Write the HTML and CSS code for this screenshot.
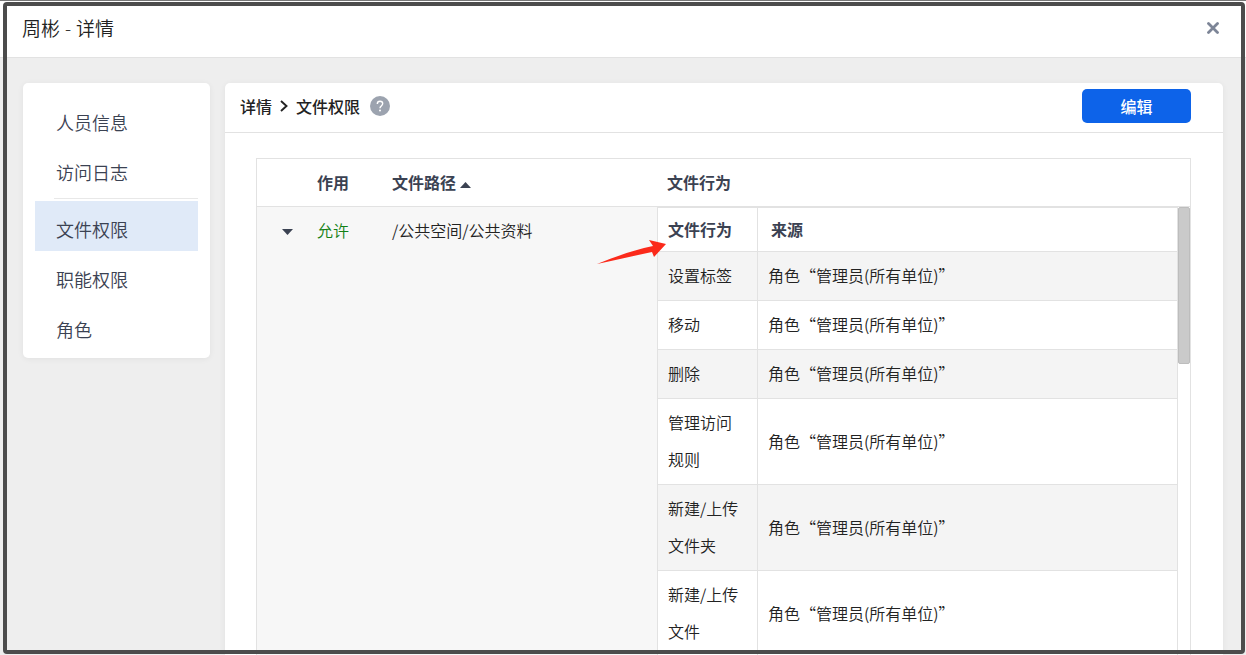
FILE: index.html
```html
<!DOCTYPE html>
<html lang="zh-CN">
<head>
<meta charset="utf-8">
<meta name="viewport" content="width=device-width, initial-scale=1">
<title>周彬 - 详情</title>
<link rel="stylesheet" href="styles.css">
</head>
<body>
<div class="dialog">
  <header class="dialog-head">
    <h1 class="dialog-title">周彬 - 详情</h1>
    <button class="close" type="button" aria-label="关闭">
      <svg width="12" height="12" viewBox="0 0 12 12"><path d="M1.5 1.5 10.5 10.5M10.5 1.5 1.5 10.5" stroke="#7d8597" stroke-width="2.8" stroke-linecap="round"/></svg>
    </button>
  </header>
  <main class="dialog-body">
    <nav class="side">
      <a class="side-item" href="#">人员信息</a>
      <a class="side-item" href="#">访问日志</a>
      <div class="side-rule"></div>
      <a class="side-item active" href="#">文件权限</a>
      <a class="side-item" href="#">职能权限</a>
      <a class="side-item" href="#">角色</a>
    </nav>
    <section class="panel">
      <div class="panel-head">
        <h2 class="crumbs">
          <span>详情</span>
          <svg width="8" height="12" viewBox="0 0 8 12" fill="none"><path d="M1 1 6.5 6 1 11" stroke="#222" stroke-width="1.9"/></svg>
          <span>文件权限</span>
        </h2>
        <svg class="help" width="20" height="20" viewBox="0 0 20 20" fill="none"><circle cx="10" cy="10" r="10" fill="#9ca3af"/><path d="M7.3 7.9C7.3 6.2 8.4 5.2 10 5.2s2.7 1 2.7 2.4c0 1.2-.7 1.8-1.5 2.5-.8.6-1.2 1.1-1.2 2.2" stroke="#fff" stroke-width="1.4"/><circle cx="10" cy="14.6" r="1" fill="#fff"/></svg>
        <button class="edit" type="button">编辑</button>
      </div>
      <div class="panel-body">
        <table class="grid">
          <colgroup><col class="c-toggle"><col class="c-effect"><col class="c-path"><col></colgroup>
          <thead>
            <tr><th></th><th>作用</th><th>文件路径<svg class="sort" width="11" height="6" viewBox="0 0 11 6"><path d="M0 6 5.5 0 11 6z" fill="#3b4252"/></svg></th><th>文件行为</th></tr>
          </thead>
          <tbody>
            <tr>
              <td class="toggle-cell"><button class="toggle" type="button" aria-label="收起"><svg width="11" height="6" viewBox="0 0 11 6"><path d="M0 0h11L5.5 6z" fill="#3b4252"/></svg></button></td>
              <td class="allow">允许</td>
              <td>/公共空间/公共资料</td>
              <td class="nest-cell">
                <div class="nest">
                  <table class="actions">
                    <colgroup><col class="c-action"><col></colgroup>
                    <thead><tr><th>文件行为</th><th class="source-head">来源</th></tr></thead>
                    <tbody>
                      <tr><td>设置标签</td><td>角色“管理员(所有单位)”</td></tr>
                      <tr><td>移动</td><td>角色“管理员(所有单位)”</td></tr>
                      <tr><td>删除</td><td>角色“管理员(所有单位)”</td></tr>
                      <tr><td>管理访问规则</td><td>角色“管理员(所有单位)”</td></tr>
                      <tr><td>新建/上传文件夹</td><td>角色“管理员(所有单位)”</td></tr>
                      <tr><td>新建/上传文件</td><td>角色“管理员(所有单位)”</td></tr>
                    </tbody>
                  </table>
                  <div class="track"><div class="thumb"></div></div>
                  <svg class="arrow" width="70" height="26" viewBox="0 0 70 26"><path d="M1 25C19 18 37 11 57 7L53 1 70 5 58 18 56 13C37 17 20 21 1 25z" fill="#fb2a1b"/></svg>
                </div>
              </td>
            </tr>
          </tbody>
        </table>
      </div>
    </section>
  </main>
</div>
<div class="frame"></div>
</body>
</html>
```

FILE: styles.css
```css
* { box-sizing: border-box; }

body {
  margin: 0;
  font-family: "Noto Sans CJK SC", "Liberation Sans", sans-serif;
  font-size: 16px;
  font-weight: 350;
  color: #222;
}

button { padding: 0; border: 0; background: none; cursor: pointer; font: inherit; }
svg { flex: none; }

.dialog {
  display: flex;
  flex-direction: column;
  height: 100vh;
  overflow: hidden;
  border-top: 1px solid #777;
  background: #eee;
}

.dialog-head {
  display: flex;
  flex: none;
  align-items: center;
  justify-content: space-between;
  height: 57px;
  padding: 0 27px 3px 22px;
  border-bottom: 1px solid #e2e2e2;
  background: #fff;
}
.dialog-title {
  margin: 0;
  font-family: "Open Sans", "Noto Sans CJK SC", sans-serif;
  font-size: 19px;
  font-weight: 350;
}
.close { display: flex; }

.dialog-body {
  display: flex;
  flex: 1;
  gap: 15px;
  min-height: 0;
  padding: 25px 23px 0;
}

.side {
  flex: none;
  align-self: flex-start;
  width: 187px;
  padding: 11px 12px 7px;
  border-radius: 5px;
  background: #fff;
  box-shadow: 0 1px 6px rgba(0, 0, 0, 0.06);
}
.side-item {
  display: block;
  padding: 7px 0 1px 21px;
  font-size: 18px;
  line-height: 42px;
  color: #3b4252;
  text-decoration: none;
}
.side-item.active { background: #e0eaf8; }
.side-rule { margin: 4px 0 2px 19px; border-top: 1px solid #e8e8e8; }

.panel {
  flex: 1;
  min-width: 0;
  border-radius: 5px 5px 0 0;
  background: #fff;
  box-shadow: 0 1px 6px rgba(0, 0, 0, 0.06);
}
.panel-head {
  display: flex;
  align-items: center;
  height: 50px;
  padding: 0 32px 3px 15px;
  border-bottom: 1px solid #e2e2e2;
}
.crumbs {
  display: flex;
  align-items: center;
  gap: 8px;
  margin: 0;
  font-size: 16px;
  font-weight: 500;
}
.help { margin-left: 10px; }
.edit {
  width: 109px;
  height: 34px;
  margin-left: auto;
  border-radius: 5px;
  background: #0d63e9;
  color: #fff;
  font-weight: 500;
}
.panel-body { padding: 25px 32px 0 31px; }

table { width: 100%; border-spacing: 0; table-layout: fixed; }
th, td { text-align: left; line-height: 37px; }
th { color: #3b4252; font-weight: 700; }

.grid { border: 1px solid #e2e2e2; border-bottom: 0; }
.grid > thead th { padding: 5px 10px; border-bottom: 1px solid #e2e2e2; }
.grid > tbody > tr > td { padding: 5px 10px; background: #f7f7f7; vertical-align: top; }
.c-toggle { width: 50px; }
.c-effect { width: 75px; }
.c-path { width: 275px; }
.sort { margin-left: 4px; vertical-align: 1px; }
.toggle-cell { text-align: right; }
.toggle { display: flex; align-items: center; height: 39px; margin-left: auto; padding-right: 4px; }
.grid > tbody > tr > td.allow { color: #138013; }
.grid > tbody > tr > td.nest-cell { padding: 0; }

.nest { display: flex; position: relative; background: #fff; }
.actions { flex: 1; min-width: 0; border: 1px solid #e2e2e2; border-bottom: 0; }
.c-action { width: 100px; }
.actions th, .actions td { padding: 5px 10px 6px; border-bottom: 1px solid #e2e2e2; }
.actions th { padding: 3px 10px; }
.actions th.source-head { padding-left: 13px; }
.actions th:first-child, .actions td:first-child { border-right: 1px solid #e2e2e2; }
.actions tbody tr:nth-child(odd) td { background: #f4f4f4; }

.track { flex: none; width: 12px; }
.thumb {
  height: 157px;
  border: 1px solid #bdbdbd;
  border-radius: 2px;
  background: #cacaca;
}
.arrow { position: absolute; top: 32px; left: -61px; }

.frame {
  position: fixed;
  inset: 2px 1px 1px 3px;
  border: 4px solid #4c4c4c;
  border-radius: 4px;
  pointer-events: none;
}
```
